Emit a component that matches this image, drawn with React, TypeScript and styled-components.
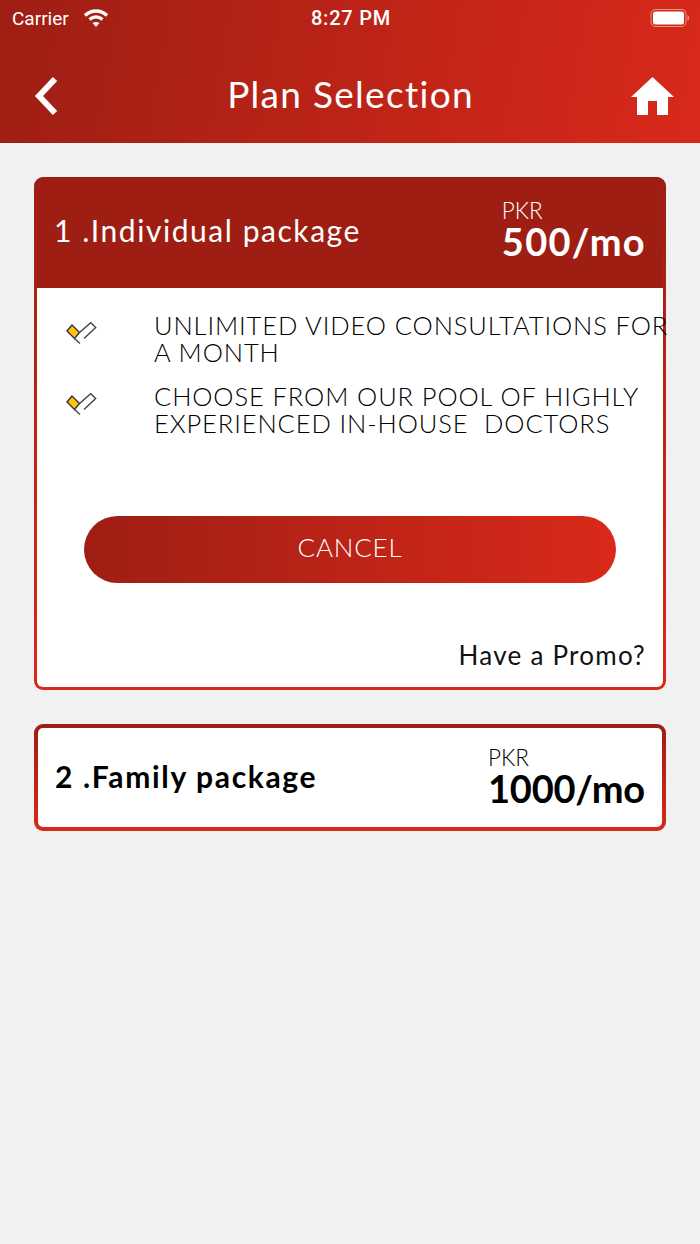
import { FC } from 'react';
import styled, { createGlobalStyle } from 'styled-components';

const DARK_RED = '#9e1e14';
const BRIGHT_RED = '#d9291a';
const FONT = '"Lato", "Open Sans", sans-serif';

const GlobalStyle = createGlobalStyle`
  html, body {
    margin: 0;
    padding: 0;
    background: #f1f1f1;
  }
  * {
    box-sizing: border-box;
  }
`;

const Page = styled.div`
  width: 700px;
  height: 1244px;
  background: #f1f1f1;
  overflow: hidden;
  font-family: ${FONT};
`;

const Header = styled.header`
  height: 143px;
  background: linear-gradient(100deg, ${DARK_RED} 0%, ${BRIGHT_RED} 100%);
  color: #fff;
`;

const StatusBar = styled.div`
  height: 40px;
  padding: 0 10px 4px 12px;
  display: grid;
  grid-template-columns: 1fr auto 1fr;
  align-items: center;
  font-family: 'Roboto', sans-serif;
`;

const StatusLeft = styled.div`
  display: flex;
  align-items: center;
  gap: 14px;
  font-size: 19px;
`;

const Clock = styled.div`
  font-size: 20px;
  font-weight: 500;
  letter-spacing: 0.8px;
`;

const StatusRight = styled.div`
  display: flex;
  justify-content: flex-end;
`;

const NavBar = styled.nav`
  height: 103px;
  padding: 8px 26px 0 27px;
  display: grid;
  grid-template-columns: 1fr auto 1fr;
  align-items: center;
`;

const NavTitle = styled.h1`
  margin: 0 0 4px;
  font-size: 37px;
  font-weight: 400;
  letter-spacing: 1.3px;
`;

const NavEnd = styled.div`
  display: flex;
  justify-content: flex-end;
`;

const Content = styled.main`
  padding: 34px 34px 0;
  display: flex;
  flex-direction: column;
  gap: 34px;
`;

const Card = styled.section<{ $open?: boolean }>`
  border-radius: 9px;
  background: linear-gradient(180deg, ${DARK_RED} 0%, ${BRIGHT_RED} 100%);
  padding: ${({ $open }) => ($open ? '0 3px 3px' : '4px')};
`;

const CardHeader = styled.div<{ $open?: boolean }>`
  height: ${({ $open }) => ($open ? '111px' : '99px')};
  padding: ${({ $open }) => ($open ? '0 19px 6px 18px' : '0 17px 3px')};
  display: flex;
  align-items: center;
  justify-content: space-between;
  color: ${({ $open }) => ($open ? '#fff' : '#000')};
  background: ${({ $open }) => ($open ? DARK_RED : '#fff')};
  border-radius: ${({ $open }) => ($open ? '7px 7px 0 0' : '5px')};
`;

const PackageName = styled.div<{ $open?: boolean }>`
  font-size: 30px;
  font-weight: ${({ $open }) => ($open ? 400 : 700)};
  letter-spacing: ${({ $open }) => ($open ? '1.55px' : '1.65px')};
  margin-left: ${({ $open }) => ($open ? '-1px' : '0')};
`;

const Price = styled.div<{ $open?: boolean }>`
  display: flex;
  flex-direction: column;
  margin-right: ${({ $open }) => ($open ? '-2px' : '0')};
`;

const Currency = styled.span`
  font-size: 22.5px;
  font-weight: 300;
  line-height: 23px;
`;

const Amount = styled.span<{ $open?: boolean }>`
  font-size: 38px;
  font-weight: 700;
  line-height: 38px;
  letter-spacing: ${({ $open }) => ($open ? '1.3px' : '-0.2px')};
`;

const CardBody = styled.div`
  background: #fff;
  height: 399px;
  padding-top: 24px;
  border-radius: 0 0 6px 6px;
  display: flex;
  flex-direction: column;
`;

const FeatureList = styled.ul`
  margin: 0;
  padding: 0;
  list-style: none;
  display: flex;
  flex-direction: column;
  gap: 17px;
`;

const Feature = styled.li`
  display: flex;
  font-size: 25.5px;
  font-weight: 300;
  line-height: 27px;
  color: #000;
  white-space: pre;
  letter-spacing: 0.9px;
`;

const FeatureIcon = styled.span`
  width: 117px;
  padding: 10px 0 0 29px;
  flex: none;
  display: flex;
  align-items: flex-start;
`;

const CancelButton = styled.button`
  margin: 79px auto 0;
  width: 532px;
  height: 67px;
  padding: 0 0 6px;
  border: 0;
  border-radius: 34px;
  background: linear-gradient(90deg, ${DARK_RED} 0%, ${BRIGHT_RED} 100%);
  color: #fff;
  font-family: ${FONT};
  font-size: 26px;
  font-weight: 300;
  letter-spacing: 0.8px;
`;

const PromoLink = styled.div`
  margin-top: 56px;
  padding-right: 17px;
  text-align: right;
  font-size: 26px;
  font-weight: 400;
  letter-spacing: 1.25px;
  color: #111;
`;

const CheckIcon: FC = () => (
  <svg width="32" height="24" viewBox="0 0 32 24" fill="none">
    <path d="M1 9 L6 3 L13.5 10.5 L8.5 16.5 Z" fill="#ffc20e" stroke="#333" strokeWidth="1.4" />
    <path
      d="M8.5 16.5 L14 21.5 M13.5 10.5 L24.7 0.7 L29.7 5.5 L18 16.5"
      stroke="#444"
      strokeWidth="1.4"
    />
  </svg>
);

const WifiIcon: FC = () => (
  <svg width="26" height="20" viewBox="0 0 26 20" fill="none" stroke="#fff" strokeWidth="3.4">
    <path d="M2 7.5 C8.5 1.5 17.5 1.5 24 7.5" />
    <path d="M6.5 11.5 C10.5 8 15.5 8 19.5 11.5" />
    <path d="M13 19 L9.5 15 C11.5 13.6 14.5 13.6 16.5 15 Z" fill="#fff" stroke="none" />
  </svg>
);

const BatteryIcon: FC = () => (
  <svg width="40" height="20" viewBox="0 0 40 20">
    <rect x="1" y="1.5" width="35" height="17" rx="4.5" fill="none" stroke="#fff" strokeOpacity="0.5" />
    <rect x="3" y="3.5" width="31" height="13" rx="2.5" fill="#fff" />
    <path d="M37.5 7 C39.5 8 39.5 12 37.5 13 Z" fill="#fff" fillOpacity="0.5" />
  </svg>
);

const BackIcon: FC = () => (
  <svg width="31" height="40" viewBox="0 0 31 40" fill="none" stroke="#fff" strokeWidth="6">
    <path d="M28 3 L12 20 L28 37" />
  </svg>
);

const HomeIcon: FC = () => (
  <svg width="43" height="38" viewBox="0 0 43 38" fill="#fff">
    <path d="M21.5 0 L43 20 H37 V38 H26 V24 H17 V38 H6 V20 H0 Z" />
  </svg>
);

const features = [
  'UNLIMITED VIDEO CONSULTATIONS FOR\nA MONTH',
  'CHOOSE FROM OUR POOL OF HIGHLY\nEXPERIENCED IN-HOUSE  DOCTORS',
];

const App: FC = () => (
  <Page>
    <GlobalStyle />
    <Header>
      <StatusBar>
        <StatusLeft>
          Carrier
          <WifiIcon />
        </StatusLeft>
        <Clock>8:27 PM</Clock>
        <StatusRight>
          <BatteryIcon />
        </StatusRight>
      </StatusBar>
      <NavBar>
        <BackIcon />
        <NavTitle>Plan Selection</NavTitle>
        <NavEnd>
          <HomeIcon />
        </NavEnd>
      </NavBar>
    </Header>
    <Content>
      <Card $open>
        <CardHeader $open>
          <PackageName $open>1 .Individual package</PackageName>
          <Price $open>
            <Currency>PKR</Currency>
            <Amount $open>500/mo</Amount>
          </Price>
        </CardHeader>
        <CardBody>
          <FeatureList>
            {features.map((text) => (
              <Feature key={text}>
                <FeatureIcon>
                  <CheckIcon />
                </FeatureIcon>
                <div>{text}</div>
              </Feature>
            ))}
          </FeatureList>
          <CancelButton type="button">CANCEL</CancelButton>
          <PromoLink>Have a Promo?</PromoLink>
        </CardBody>
      </Card>
      <Card>
        <CardHeader>
          <PackageName>2 .Family package</PackageName>
          <Price>
            <Currency>PKR</Currency>
            <Amount>1000/mo</Amount>
          </Price>
        </CardHeader>
      </Card>
    </Content>
  </Page>
);

export default App;
